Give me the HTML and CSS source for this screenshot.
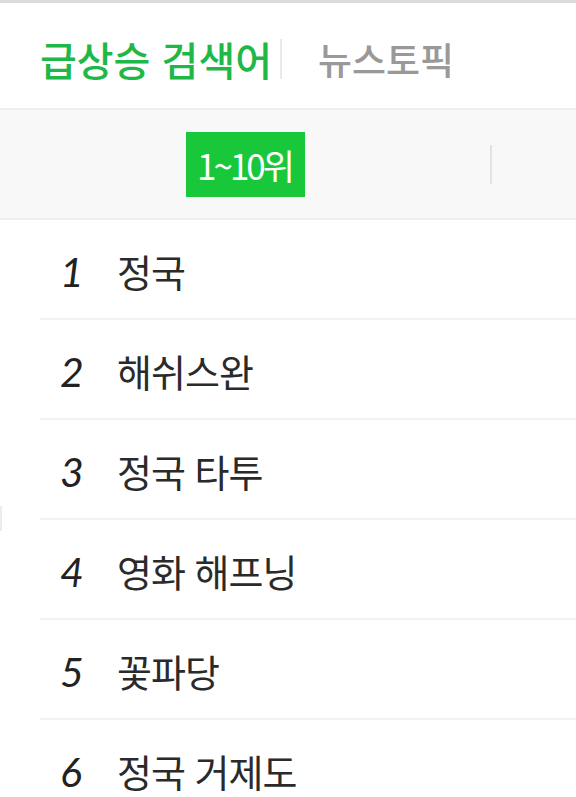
FILE: index.html
```html
<!DOCTYPE html>
<html lang="ko">
<head>
<meta charset="utf-8">
<link rel="stylesheet" href="styles.css">
</head>
<body>
<div class="page">
  <div class="tabs">
    <span class="tab active">급상승 검색어</span>
    <span class="tab-sep"></span>
    <span class="tab">뉴스토픽</span>
  </div>
  <div class="band">
    <span class="range">1~10위</span>
    <span class="band-sep"></span>
  </div>
  <ul class="list">
    <li class="row"><span class="num">1</span><span class="kw">정국</span></li>
    <li class="row"><span class="num">2</span><span class="kw">해쉬스완</span></li>
    <li class="row"><span class="num">3</span><span class="kw">정국 타투</span></li>
    <li class="row"><span class="num">4</span><span class="kw">영화 해프닝</span></li>
    <li class="row"><span class="num">5</span><span class="kw">꽃파당</span></li>
    <li class="row"><span class="num">6</span><span class="kw">정국 거제도</span></li>
  </ul>
  <span class="edge-mark"></span>
</div>
</body>
</html>
```
FILE: styles.css
```css
html, body {
  margin: 0;
  padding: 0;
  background: #fff;
}
body {
  font-family: "Noto Sans CJK KR", "Noto Sans", sans-serif;
  overflow: hidden;
}
.page {
  position: relative;
  width: 576px;
  height: 797px;
  overflow: hidden;
  border-top: 3px solid #dcdcdc;
  box-sizing: border-box;
}
.tabs {
  height: 107px;
  box-sizing: border-box;
  border-bottom: 2px solid #eeeeee;
  display: flex;
  align-items: center;
  padding-left: 40px;
  padding-top: 7px;
}
.tab {
  font-size: 37px;
  line-height: 1;
  font-weight: 500;
  color: #999999;
}
.tab.active {
  font-size: 40px;
  color: #1fb848;
}
.tab-sep {
  width: 2px;
  height: 40px;
  background: #eaeaea;
  margin: 0 36px 0 8px;
}
.band {
  height: 110px;
  box-sizing: border-box;
  background: #f8f8f8;
  border-bottom: 2px solid #eeeeee;
  display: flex;
  align-items: center;
  padding-left: 186px;
}
.range {
  width: 119px;
  height: 65px;
  background: #19c83a;
  color: #fff;
  font-size: 35px;
  letter-spacing: -3px;
  display: flex;
  align-items: center;
  justify-content: center;
  padding-right: 2px;
  box-sizing: border-box;
}
.band-sep {
  width: 2px;
  height: 39px;
  background: #e2e2e2;
  margin-left: 185px;
}
.list {
  list-style: none;
  margin: 0;
  padding: 0 0 0 40px;
}
.row {
  height: 100px;
  box-sizing: border-box;
  border-bottom: 2px solid #f2f2f2;
  display: flex;
  align-items: center;
  padding-top: 4px;
}
.num {
  width: 77px;
  padding-left: 20px;
  box-sizing: border-box;
  font-family: "Lato", sans-serif;
  font-style: italic;
  font-size: 41px;
  line-height: 1;
  color: #222;
}
.kw {
  font-size: 38px;
  line-height: 1;
  color: #2a2a2a;
  letter-spacing: -1px;
}
.edge-mark {
  position: absolute;
  left: 0;
  top: 503px;
  width: 2px;
  height: 25px;
  background: #ececec;
}
```
